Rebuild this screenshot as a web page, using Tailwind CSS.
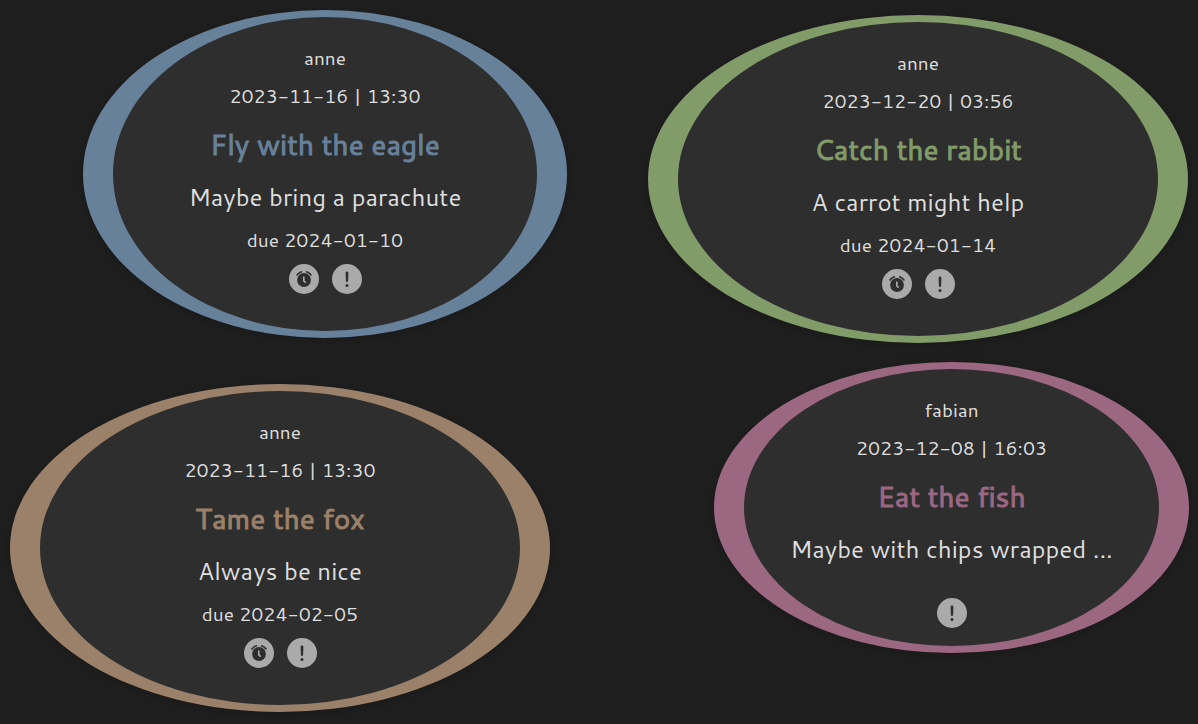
<!DOCTYPE html>
<html lang="en">
<head>
<meta charset="utf-8">
<title>Tasks</title>
<script src="https://cdn.jsdelivr.net/npm/@tailwindcss/browser@4"></script>
</head>
<body class="min-h-screen bg-[#1f1f1f] font-[Cantarell,'Noto_Sans',sans-serif] text-[#dedede]">
<svg class="hidden" aria-hidden="true">
  <symbol id="alarm" viewBox="0 0 30 30">
    <g fill="none" stroke="#2e2e2e" stroke-width="1.6" stroke-linecap="round"><path d="M8 11Q9.4 8.8 12.4 7.8M17.6 7.8Q20.6 8.8 22 11"/></g>
    <circle cx="15" cy="16" r="6.9" fill="#2e2e2e"/>
    <path d="M14.8 12.6v4.2l1.8 1.8" fill="none" stroke="#aaa" stroke-width="1.6"/>
  </symbol>
  <symbol id="bang" viewBox="0 0 30 30">
    <path d="M13.6 9Q13.6 7.6 15 7.6T16.4 9L16.1 17Q16 18 15 18T13.9 17Z" fill="#2e2e2e"/>
    <circle cx="15" cy="21.4" r="1.5" fill="#2e2e2e"/>
  </symbol>
</svg>
<main class="flex justify-between px-[10px] text-center">
  <div class="flex w-[557px] flex-col gap-[46px] pt-[10px]">
    <article class="flex w-[484px] flex-col items-center self-end rounded-[50%] border-x-[30px] border-y-[7px] border-[#67819b] bg-[#2e2e2e] pt-[23px] pb-[37px] shadow-[0_2px_14px_rgba(0,0,0,0.2)]">
      <p class="text-[19px] leading-9">anne</p>
      <p class="text-[19px] leading-10">2023-11-16 | 13:30</p>
      <h2 class="text-[28px] leading-14 font-normal text-[#67819b] [-webkit-text-stroke:1px]">Fly with the eagle</h2>
      <p class="text-2xl leading-[50px]">Maybe bring a parachute</p>
      <p class="text-[19px] leading-9">due 2024-01-10</p>
      <div class="mt-1.5 flex gap-[13px]">
        <svg class="size-[30px] rounded-full bg-[#aaa]" role="img" aria-label="Due date"><use href="#alarm"/></svg>
        <svg class="size-[30px] rounded-full bg-[#aaa]" role="img" aria-label="Important"><use href="#bang"/></svg>
      </div>
    </article>
    <article class="flex w-[540px] flex-col items-center self-start rounded-[50%] border-x-[30px] border-y-[7px] border-[#9b8169] bg-[#2e2e2e] pt-[23px] pb-[37px] shadow-[0_2px_14px_rgba(0,0,0,0.2)]">
      <p class="text-[19px] leading-9">anne</p>
      <p class="text-[19px] leading-10">2023-11-16 | 13:30</p>
      <h2 class="text-[28px] leading-14 font-normal text-[#9b8169] [-webkit-text-stroke:1px]">Tame the fox</h2>
      <p class="text-2xl leading-[50px]">Always be nice</p>
      <p class="text-[19px] leading-9">due 2024-02-05</p>
      <div class="mt-1.5 flex gap-[13px]">
        <svg class="size-[30px] rounded-full bg-[#aaa]" role="img" aria-label="Due date"><use href="#alarm"/></svg>
        <svg class="size-[30px] rounded-full bg-[#aaa]" role="img" aria-label="Important"><use href="#bang"/></svg>
      </div>
    </article>
  </div>
  <div class="-mr-px flex w-[541px] flex-col gap-[19px] pt-[15px]">
    <article class="flex w-[540px] flex-col items-center self-start rounded-[50%] border-x-[30px] border-y-[7px] border-[#819b69] bg-[#2e2e2e] pt-[23px] pb-[37px] shadow-[0_2px_14px_rgba(0,0,0,0.2)]">
      <p class="text-[19px] leading-9">anne</p>
      <p class="text-[19px] leading-10">2023-12-20 | 03:56</p>
      <h2 class="text-[28px] leading-14 font-normal text-[#819b69] [-webkit-text-stroke:1px]">Catch the rabbit</h2>
      <p class="text-2xl leading-[50px]">A carrot might help</p>
      <p class="text-[19px] leading-9">due 2024-01-14</p>
      <div class="mt-1.5 flex gap-[13px]">
        <svg class="size-[30px] rounded-full bg-[#aaa]" role="img" aria-label="Due date"><use href="#alarm"/></svg>
        <svg class="size-[30px] rounded-full bg-[#aaa]" role="img" aria-label="Important"><use href="#bang"/></svg>
      </div>
    </article>
    <article class="flex w-[475px] flex-col items-center self-end rounded-[50%] border-x-[30px] border-y-[7px] border-[#9b6781] bg-[#2e2e2e] pt-[23px] pb-[18px] shadow-[0_2px_14px_rgba(0,0,0,0.2)]">
      <p class="text-[19px] leading-9">fabian</p>
      <p class="text-[19px] leading-10">2023-12-08 | 16:03</p>
      <h2 class="text-[28px] leading-14 font-normal text-[#9b6781] [-webkit-text-stroke:1px]">Eat the fish</h2>
      <p class="text-2xl leading-[50px]">Maybe with chips wrapped ...</p>
      <div class="mt-6 flex gap-[13px]">
        <svg class="size-[30px] rounded-full bg-[#aaa]" role="img" aria-label="Important"><use href="#bang"/></svg>
      </div>
    </article>
  </div>
</main>
</body>
</html>
